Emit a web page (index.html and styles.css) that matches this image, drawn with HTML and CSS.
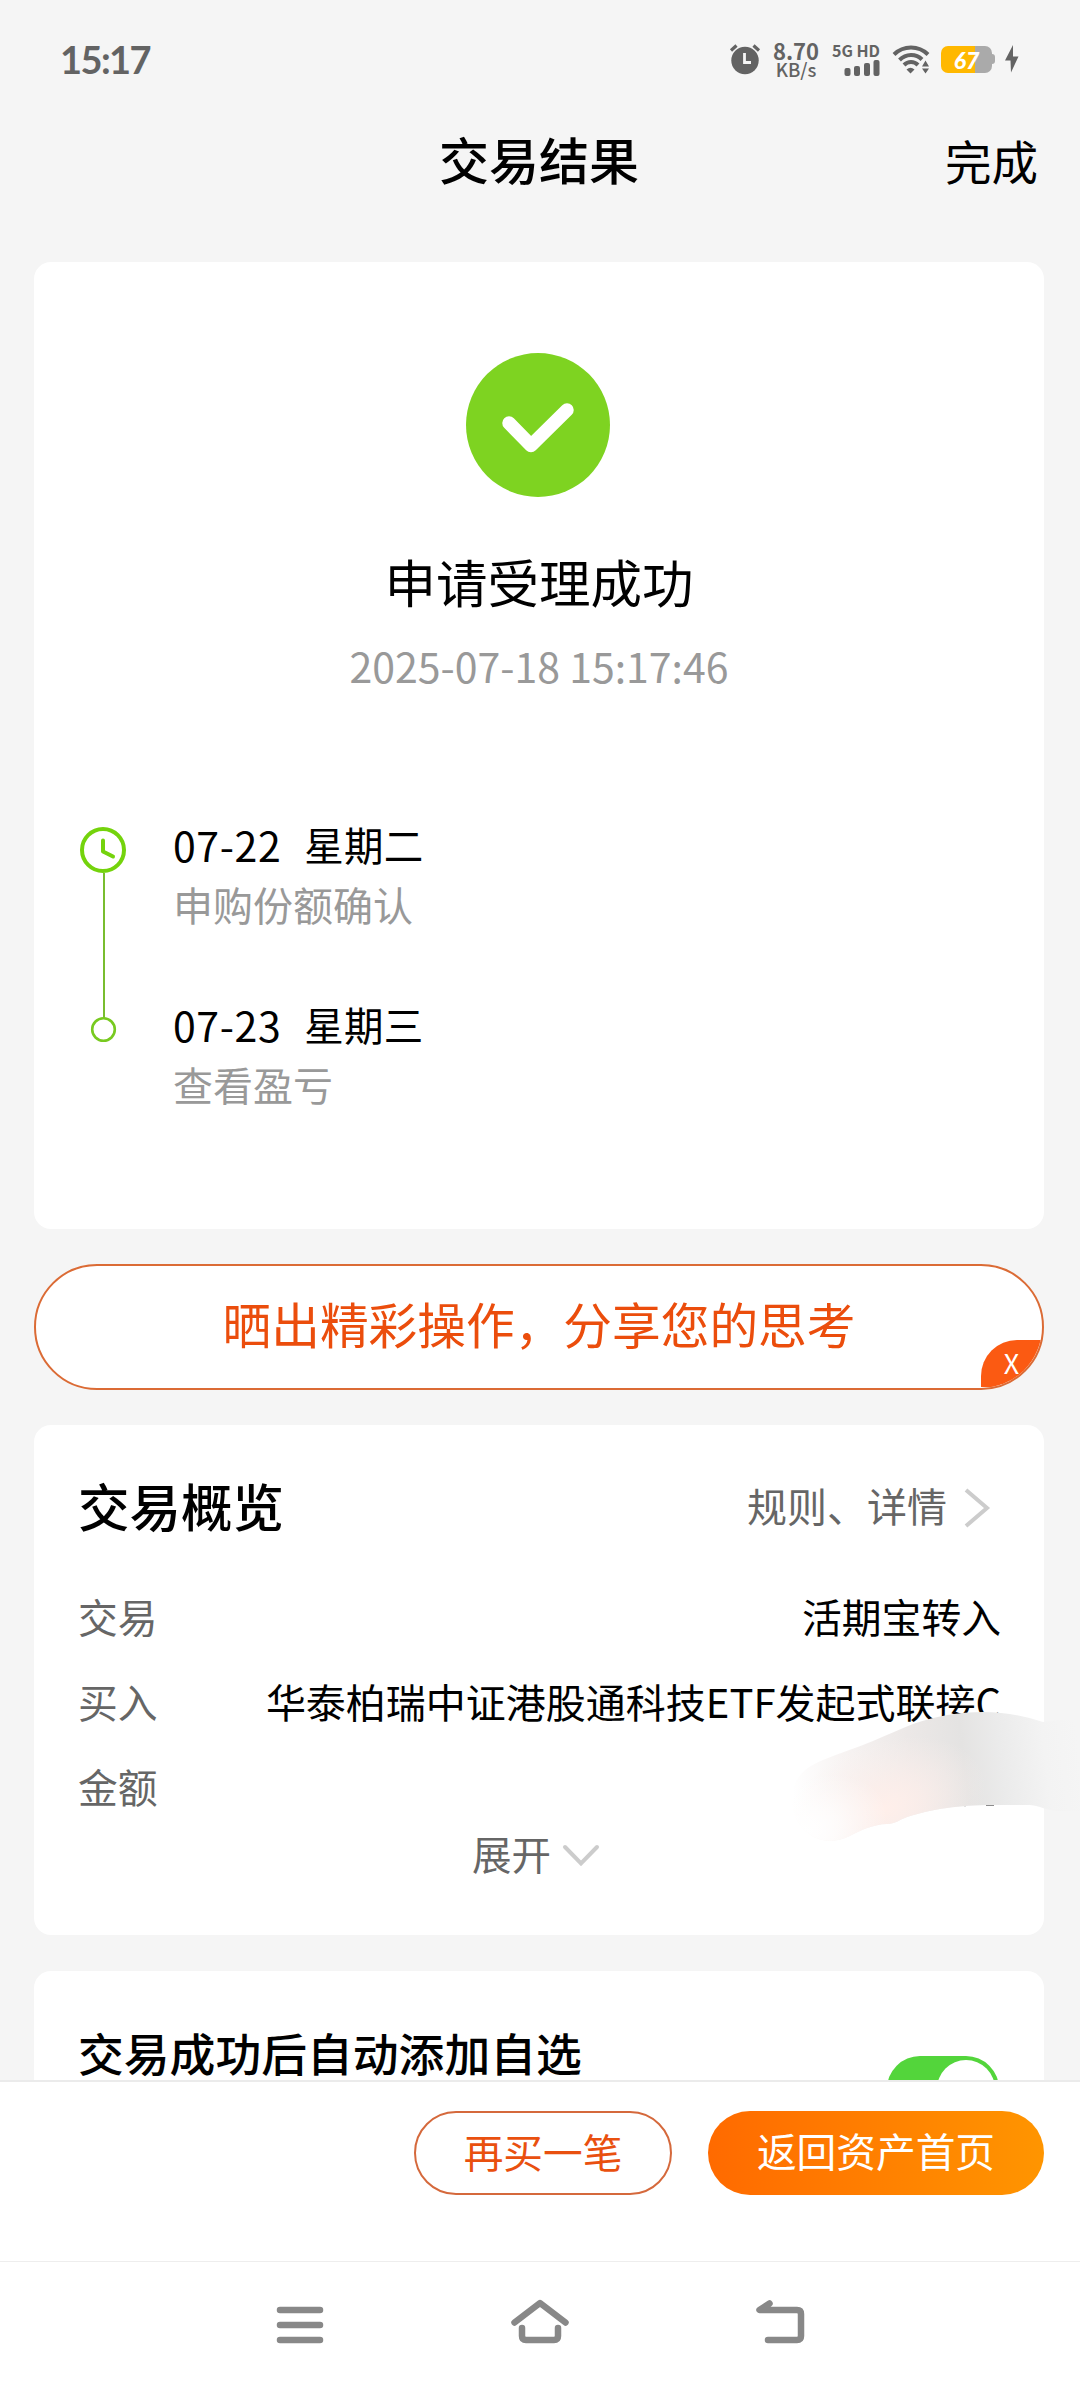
FILE: index.html
```html
<!DOCTYPE html>
<html lang="zh-CN">
<head>
<meta charset="utf-8">
<title>交易结果</title>
<link rel="stylesheet" href="styles.css">
</head>
<body>
<div class="screen">
  <div class="status">
    <span class="clock">15:17</span>
    <div class="status-right">
      <svg class="alarm" width="32" height="32" viewBox="0 0 32 32">
        <circle cx="16" cy="17.5" r="13.7" fill="#636363"/>
        <path d="M2 7.5L7.5 2.500M30 7.500L24.500 2.500" stroke="#636363" stroke-width="3.200" fill="none"/>
        <path d="M15.500 10v9.500h6.500" stroke="#f5f5f5" stroke-width="2.800" fill="none"/>
      </svg>
      <div class="speed"><span class="speed-num">8.70</span><span class="speed-unit">KB/s</span></div>
      <div class="signal">
        <div class="net"><span>5G</span><span>HD</span></div>
        <svg width="36" height="18" viewBox="0 0 36 18" fill="#636363">
          <rect x="0.500" y="9" width="6" height="8" rx="2"/><rect x="10" y="7" width="6" height="10" rx="2"/><rect x="20" y="4" width="6" height="13" rx="2"/><rect x="29.500" y="1" width="6" height="16" rx="2"/>
        </svg>
      </div>
      <svg class="wifi" width="38" height="30" viewBox="0 0 38 30">
        <g fill="none" stroke="#636363" stroke-width="4">
          <path d="M2 10.500C11.500 1.200 26.500 1.200 36 10.500"/>
          <path d="M7.500 16C14 9.500 24 9.500 30 15.500"/>
          <path d="M12 21C16 17 22 17 26 21"/>
        </g>
        <path d="M14.500 25.500Q18.500 22 22.500 25.500L18.500 29.500Z" fill="#636363"/>
        <path d="M30 22.500L33.500 16.500L37 22.500ZM30 24.500H37L33.500 29.500Z" fill="#636363"/>
      </svg>
      <div class="battery"><span class="battery-body">67</span><span class="battery-tip"></span></div>
      <svg class="bolt" width="14" height="28" viewBox="0 0 14 28"><path d="M8 0L0 15.500H5.500L6 27.500L13.500 11.500H8Z" fill="#636363"/></svg>
    </div>
  </div>

  <header class="header">
    <span></span>
    <h1>交易结果</h1>
    <a class="done">完成</a>
  </header>

  <main class="content">
    <section class="card result">
      <svg class="success" width="144" height="144" viewBox="0 0 144 144">
        <circle cx="72" cy="72" r="72" fill="#7ed321"/>
        <path d="M43 70L65 92.500L101 57" fill="none" stroke="#fff" stroke-width="13.500" stroke-linecap="round" stroke-linejoin="round"/>
      </svg>
      <h2>申请受理成功</h2>
      <p class="time">2025-07-18 15:17:46</p>
      <div class="timeline">
        <svg width="60" height="301" viewBox="0 0 60 301" fill="none">
          <path d="M30 60V205" stroke="#79bd2f" stroke-width="2"/>
          <circle cx="29" cy="37" r="21" stroke="#74d30c" stroke-width="4"/>
          <path d="M29 27.500V38.500L39 43.500" stroke="#74d30c" stroke-width="4" stroke-linecap="round" stroke-linejoin="round"/>
          <circle cx="29.500" cy="216.500" r="11.300" stroke="#78ca20" stroke-width="2.600" fill="#fff"/>
        </svg>
        <div class="steps">
          <div class="step"><p class="step-date"><span>07-22</span><span class="week">星期二</span></p><p class="step-text">申购份额确认</p></div>
          <div class="step"><p class="step-date"><span>07-23</span><span class="week">星期三</span></p><p class="step-text">查看盈亏</p></div>
        </div>
      </div>
    </section>

    <div class="share">晒出精彩操作，分享您的思考<span class="close">X</span></div>

    <section class="card overview">
      <div class="overview-head">
        <h3>交易概览</h3>
        <a class="detail">规则、详情<svg width="28" height="42" viewBox="0 0 28 42"><path d="M3 3L24 21L3 39" fill="none" stroke="#ccc" stroke-width="4"/></svg></a>
      </div>
      <div class="row"><span class="label">交易</span><span>活期宝转入</span></div>
      <div class="row"><span class="label">买入</span><span class="fund">华泰柏瑞中证港股通科技ETF发起式联接C</span></div>
      <div class="row"><span class="label">金额</span></div>
      <div class="expand">展开<svg width="38" height="24" viewBox="0 0 38 24"><path d="M3 3L19 19.500L35 3" fill="none" stroke="#ccc" stroke-width="4" stroke-linecap="round"/></svg></div>
      <svg class="smudge" width="300" height="140" viewBox="780 1705 300 140">
        <defs>
          <linearGradient id="smear" gradientUnits="userSpaceOnUse" x1="792" y1="1790" x2="1080" y2="1755">
            <stop offset="0" stop-color="#fff"/><stop offset=".2" stop-color="#f7f3f2"/><stop offset=".42" stop-color="#ece8e7"/><stop offset=".6" stop-color="#e4e3e2"/><stop offset=".73" stop-color="#ebebeb"/><stop offset=".88" stop-color="#f3f3f3"/><stop offset="1" stop-color="#f5f5f5"/>
          </linearGradient>
          <radialGradient id="blush" gradientUnits="userSpaceOnUse" cx="0" cy="0" r="1" gradientTransform="translate(885 1808) rotate(-20) scale(105 66)">
            <stop offset="0" stop-color="#ffefea"/><stop offset=".35" stop-color="#fdeeea" stop-opacity=".75"/><stop offset="1" stop-color="#fbf0ed" stop-opacity="0"/>
          </radialGradient>
          <radialGradient id="fade" gradientUnits="userSpaceOnUse" cx="0" cy="0" r="1" gradientTransform="translate(805 1832) rotate(-20) scale(85 54)">
            <stop offset="0" stop-color="#fff"/><stop offset=".4" stop-color="#fff" stop-opacity=".7"/><stop offset="1" stop-color="#fff" stop-opacity="0"/>
          </radialGradient>
          <path id="stroke" d="M792 1800C792 1777 806 1767 823 1760C840 1753 856 1748 873 1741C887 1735 900 1729 913 1724C936 1716 959 1712 983 1712C1005 1712 1024 1716 1043 1722L1060 1720L1080 1721V1811H1060C1048 1811 1040 1806 1030 1805H993C975 1805 961 1806 947 1808C931 1810 920 1813 907 1817C899 1820 895 1824 887 1824C880 1824 874 1826 867 1828C855 1832 845 1841 830 1841C806 1840 792 1820 792 1800Z"/>
        </defs>
        <path d="M986 1805.200h8M964 1805.500h2" stroke="#8c8c8c" stroke-width="1.500"/>
        <use href="#stroke" fill="url(#smear)"/>
        <use href="#stroke" fill="url(#blush)"/>
        <use href="#stroke" fill="url(#fade)"/>
      </svg>
    </section>

    <section class="card auto-add">
      <h4>交易成功后自动添加自选</h4>
      <span class="toggle"><span class="knob"></span></span>
    </section>
  </main>

  <div class="actions">
    <a class="btn again">再买一笔</a>
    <a class="btn home">返回资产首页</a>
  </div>

  <nav class="nav">
    <svg width="60" height="60" viewBox="0 0 60 60"><path d="M10 15H50M10 30H50M10 45H50"/></svg>
    <svg width="60" height="60" viewBox="0 0 60 60"><path d="M4.500 27.500L30 8L55.500 27.500M12 33V41Q12 45 16 45H44Q48 45 48 41V33"/></svg>
    <svg width="60" height="60" viewBox="0 0 60 60"><path d="M19.500 8.500L9.500 15H47Q51 15 51 19V41Q51 45 47 45H18"/></svg>
  </nav>
</div>
</body>
</html>
```

FILE: styles.css
```css
* { box-sizing: border-box; }
body, h1, h2, h3, h4, p { margin: 0; font-weight: 400; }
body {
  background: #f5f5f5;
  color: #000;
  font-family: "Noto Sans CJK SC", sans-serif;
  font-size: 40px;
}
svg { display: block; flex: none; }
.screen {
  width: 1080px;
  height: 2388px;
  display: flex;
  flex-direction: column;
  overflow: hidden;
}

/* status bar */
.status {
  height: 118px;
  padding: 0 61px 0 60px;
  display: flex;
  align-items: center;
  justify-content: space-between;
  color: #636363;
}
.clock { font-family: Lato, sans-serif; font-weight: 700; font-size: 38px; line-height: 50px; letter-spacing: -1.600px; }
.status-right { display: flex; align-items: center; }
.alarm { margin-right: 12px; }
.speed { display: flex; flex-direction: column; align-items: center; width: 46px; font-weight: 700; }
.speed-num { font-size: 22px; line-height: 19px; }
.speed-unit { font-size: 18.500px; line-height: 18px; font-weight: 500; }
.signal { display: flex; flex-direction: column; align-items: flex-end; width: 48px; margin-left: 13px; }
.net { width: 48px; display: flex; justify-content: space-between; font-weight: 700; font-size: 16px; line-height: 17px; }
.wifi { margin-left: 12px; }
.battery { display: flex; align-items: center; margin-left: 11px; }
.battery-body {
  width: 51px; height: 27px; border-radius: 7px;
  background: linear-gradient(90deg, #ffb800 0 34px, #aaa 34px);
  color: #fff; font-family: Lato, sans-serif; font-weight: 900; font-style: italic; font-size: 23px; line-height: 28px; text-align: center;
}
.battery-tip { width: 3px; height: 10px; border-radius: 0 3px 3px 0; background: #aaa; }
.bolt { margin-left: 10px; }

/* page header */
.header { height: 80px; padding: 0 42px 0 40px; display: grid; grid-template-columns: 1fr 200px 1fr; align-items: center; }
.header h1 { font-weight: 500; font-size: 50px; line-height: 80px; white-space: nowrap; }
.done { justify-self: end; font-size: 46.500px; line-height: 76px; padding-top: 4px; }

/* scrolling content */
.content {
  height: 1882px;
  padding: 64px 36px 0 34px;
  display: flex;
  flex-direction: column;
  overflow: hidden;
}
.card { background: #fff; border-radius: 17px; flex: none; }
.result { height: 967px; padding-top: 91px; display: flex; flex-direction: column; align-items: center; }
.result .success { margin-right: 2px; }
.result h2 { margin-top: 54px; font-size: 51.500px; line-height: 60px; }
.time { margin-top: 29px; font-size: 41px; line-height: 50px; color: #999; }
.timeline { align-self: stretch; margin-top: 123px; padding-left: 40px; display: flex; gap: 39px; }
.steps { display: flex; flex-direction: column; gap: 59px; }
.step-date { display: flex; gap: 23px; padding-top: 1px; font-size: 41px; line-height: 60px; letter-spacing: .600px; }
.week { font-size: 39.500px; letter-spacing: .300px; }
.step-text { line-height: 60px; color: #999; }

.share {
  position: relative;
  flex: none;
  height: 126px;
  margin-top: 35px;
  border: 2px solid #db6b35;
  border-radius: 63px;
  background: #fff;
  color: #eb4d0c;
  font-size: 48.700px;
  line-height: 114px;
  text-align: center;
  overflow: hidden;
}
.close {
  position: absolute; right: 0; bottom: 1px;
  width: 61px; height: 47px;
  border-radius: 36px 0 0 0;
  background: #fb5a12;
  color: #fff;
  font-size: 27px; line-height: 45px; text-align: center;
}

.overview { position: relative; height: 510px; margin-top: 35px; padding: 0 43px 0 44px; }
.overview-head { height: 150px; padding-top: 38px; display: flex; justify-content: space-between; }
.overview h3 { font-weight: 500; font-size: 51.500px; line-height: 84px; }
.detail { display: flex; align-items: center; gap: 16px; height: 84px; padding-right: 10px; color: #666; line-height: 80px; }
.detail svg { margin-top: 5px; }
.row { height: 85px; display: flex; justify-content: space-between; line-height: 82px; white-space: nowrap; font-size: 39.800px; }
.fund { font-size: 40px; }
.label { color: #666; }
.expand { height: 60px; margin-top: -8px; padding-right: 7px; display: flex; align-items: center; justify-content: center; gap: 11px; color: #666; font-size: 39.500px; }
.expand svg { margin-top: 8px; }
.smudge { position: absolute; right: -36px; top: 280px; }

.auto-add { height: 180px; margin-top: 36px; padding: 0 45px 0 44px; display: flex; justify-content: space-between; }
.auto-add h4 { margin-top: 56px; font-weight: 500; font-size: 45.800px; line-height: 50px; }
.toggle { width: 112px; height: 66px; margin-top: 85px; padding: 4px; border-radius: 33px; background: #53d53b; display: flex; justify-content: flex-end; }
.knob { width: 58px; height: 58px; border-radius: 50%; background: #fff; }

/* bottom actions */
.actions {
  height: 181px;
  padding: 29px 36px 0 0;
  display: flex;
  justify-content: flex-end;
  gap: 36px;
  border-top: 2px solid #ebebeb;
  background: #fff;
}
.btn { height: 84px; border-radius: 42px; text-align: center; font-size: 39.700px; line-height: 78px; }
.again { width: 258px; border: 2px solid #d5693c; color: #e9500f; line-height: 75px; }
.home { width: 336px; background: linear-gradient(90deg, #ff6a00, #ff9500); color: #fff; }

/* system navigation */
.nav {
  flex: 1;
  padding: 33px 270px 0;
  display: flex;
  justify-content: space-between;
  border-top: 1px solid #eee;
  background: #fff;
}
.nav path { fill: none; stroke: #888; stroke-width: 6.500; stroke-linecap: round; stroke-linejoin: round; }
```
